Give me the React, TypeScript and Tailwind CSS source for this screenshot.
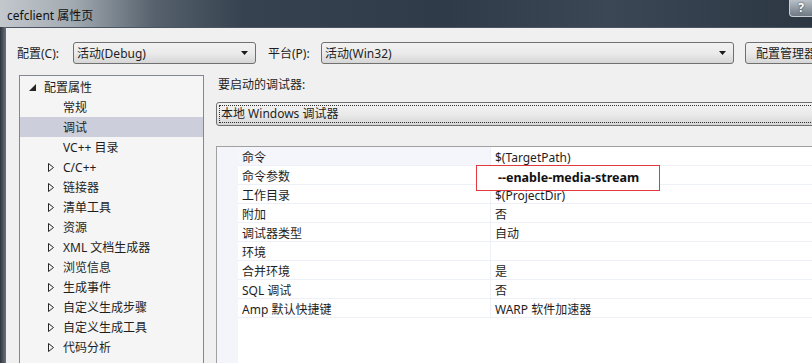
import React from "react";

const treeItems = [
  { label: "配置属性", level: 0, expanded: true },
  { label: "常规", level: 1 },
  { label: "调试", level: 1, selected: true },
  { label: "VC++ 目录", level: 1 },
  { label: "C/C++", level: 1, arrow: true },
  { label: "链接器", level: 1, arrow: true },
  { label: "清单工具", level: 1, arrow: true },
  { label: "资源", level: 1, arrow: true },
  { label: "XML 文档生成器", level: 1, arrow: true },
  { label: "浏览信息", level: 1, arrow: true },
  { label: "生成事件", level: 1, arrow: true },
  { label: "自定义生成步骤", level: 1, arrow: true },
  { label: "自定义生成工具", level: 1, arrow: true },
  { label: "代码分析", level: 1, arrow: true },
];

const props = [
  { name: "命令", value: "$(TargetPath)" },
  { name: "命令参数", value: "", highlight: "--enable-media-stream" },
  { name: "工作目录", value: "$(ProjectDir)" },
  { name: "附加", value: "否" },
  { name: "调试器类型", value: "自动" },
  { name: "环境", value: "" },
  { name: "合并环境", value: "是" },
  { name: "SQL 调试", value: "否" },
  { name: "Amp 默认快捷键", value: "WARP 软件加速器" },
];

const DropArrow = () => (
  <svg width="7" height="4" viewBox="0 0 7 4" className="shrink-0">
    <path d="M0 0H7L3.5 4Z" fill="#1a1a1a" />
  </svg>
);

const Combo = (props: any) => {
  const { text, width } = props;
  return (
    <div
      className={`${width} h-[22px] flex items-center justify-between pl-[3px] pr-[7px] rounded-[3px] border border-[#707070] bg-gradient-to-b from-[#f2f2f2] via-[#ebebeb] to-[#d6d6d6]`}
    >
      <span className="pt-[2px]">{text}</span>
      <DropArrow />
    </div>
  );
};

const TreeRow = (props: any) => {
  const { item } = props;
  return (
    <div
      className={`h-[20px] flex items-center relative ${
        item.selected ? "bg-[#cccfdb]" : ""
      }`}
    >
      {item.expanded && (
        <svg width="7" height="7" viewBox="0 0 7 7" className="absolute left-[9px] top-[7px]">
          <path d="M7 0V7H0Z" fill="#262626" />
        </svg>
      )}
      {item.arrow && (
        <svg width="6" height="9" viewBox="0 0 6 9" className="absolute left-[28px] top-[6px]">
          <path d="M0.5 0.5V8.5L5.5 4.5Z" fill="none" stroke="#262626" strokeWidth="1" />
        </svg>
      )}
      <span className={`pt-[2px] ${item.level === 0 ? "ml-[24px]" : "ml-[43px]"}`}>{item.label}</span>
    </div>
  );
};

export default function App() {
  return (
    <div className="w-[812px] h-[363px] overflow-hidden flex flex-col text-[12px] text-[#1e1e1e] font-[family-name:'Noto_Sans','Noto_Sans_CJK_SC',sans-serif] leading-none whitespace-nowrap">
      {/* title bar */}
      <div className="h-[27px] shrink-0 flex items-center relative bg-[linear-gradient(90deg,#c3c8cd_0%,#a2aab1_9%,#56616d_19%,#36424f_30%,#2f3b48_55%,#3b4755_75%,#2c3743_100%)]">
        <span className="ml-[7px] pt-[4px] text-[#101010]">cefclient 属性页</span>
        <div className="absolute right-0 top-0 w-[23px] h-[17px] rounded-bl-[4px] border border-t-0 border-r-0 border-[#c9ced3] bg-gradient-to-b from-[#b9c0c7] to-[#6e7984] flex items-center justify-center">
          <span className="text-white font-bold text-[12px] [text-shadow:0_0_2px_#222]">?</span>
        </div>
      </div>

      <div className="flex-1 flex min-h-0">
        {/* left window frame */}
        <div className="w-[6px] shrink-0 bg-gradient-to-r from-[#2f353c] via-[#4c5560] to-[#6a737c]" />

        {/* client area */}
        <div className="flex-1 bg-[#f0f0f0] border-t border-[#4b5560] flex flex-col min-w-0">
          <div className="mt-[14px] h-[22px] flex items-center shrink-0">
            <span className="w-[67px] pl-[11px] pt-[2px] shrink-0">配置(C):</span>
            <Combo text="活动(Debug)" width="w-[183px] shrink-0" />
            <span className="w-[65px] pl-[12px] pt-[2px] shrink-0">平台(P):</span>
            <Combo text="活动(Win32)" width="w-[413px] shrink-0" />
            <div className="ml-[11px] w-[80px] h-[22px] shrink-0 rounded-[3px] border border-[#707070] bg-gradient-to-b from-[#f2f2f2] via-[#ebebeb] to-[#d6d6d6] flex items-center pl-[10px] pt-[2px]">
              配置管理器
            </div>
          </div>

          <div className="mt-[11px] flex flex-1 min-h-0">
            {/* tree */}
            <div className="ml-[13px] w-[185px] shrink-0 border border-b-0 border-[#828790] bg-[#f5f5f5] pt-[1px]">
              {treeItems.map((item) => (
                <TreeRow key={item.label} item={item} />
              ))}
            </div>

            {/* right side */}
            <div className="ml-[12px] flex-1 flex flex-col min-w-0">
              <div className="pt-[2px] h-[17px] flex items-center ml-[2px]">要启动的调试器:</div>
              <div className="mt-[10px] h-[24px] w-[620px] shrink-0 rounded-[3px] border border-[#707070] bg-gradient-to-b from-[#f2f2f2] via-[#ebebeb] to-[#d6d6d6] p-[2px]">
                <div className="h-full border border-dotted border-[#303030] flex items-center pl-[1px]">
                  本地 Windows 调试器
                </div>
              </div>

              {/* property grid */}
              <div className="mt-[20px] flex-1 border-t border-l border-[#a0a0a0] bg-white flex">
                <div className="w-[21px] shrink-0 bg-[#f3f5fa]" />
                <div className="flex-1 flex flex-col">
                  {props.map((p, i) => (
                    <div key={p.name} className="h-[19px] flex border-b border-[#edf0f6]">
                      <div
                        className={`w-[253px] shrink-0 flex items-center pl-[4px] pt-[3px] border-r border-[#edf0f6] ${
                          i === 0 ? "bg-[#f4f6fb]" : ""
                        }`}
                      >
                        {p.name}
                      </div>
                      <div className="flex-1 flex items-center pl-[4px] pt-[3px] relative">
                        {p.value}
                        {p.highlight && (
                          <div className="absolute left-[-15px] top-[-1px] w-[184px] h-[26px] z-10 border border-[#e0393e] bg-white flex items-center pl-[21px] pt-[1px] font-bold text-[12.5px] text-[#111]">
                            {p.highlight}
                          </div>
                        )}
                      </div>
                    </div>
                  ))}
                </div>
              </div>
            </div>
          </div>
        </div>
      </div>
    </div>
  );
}
